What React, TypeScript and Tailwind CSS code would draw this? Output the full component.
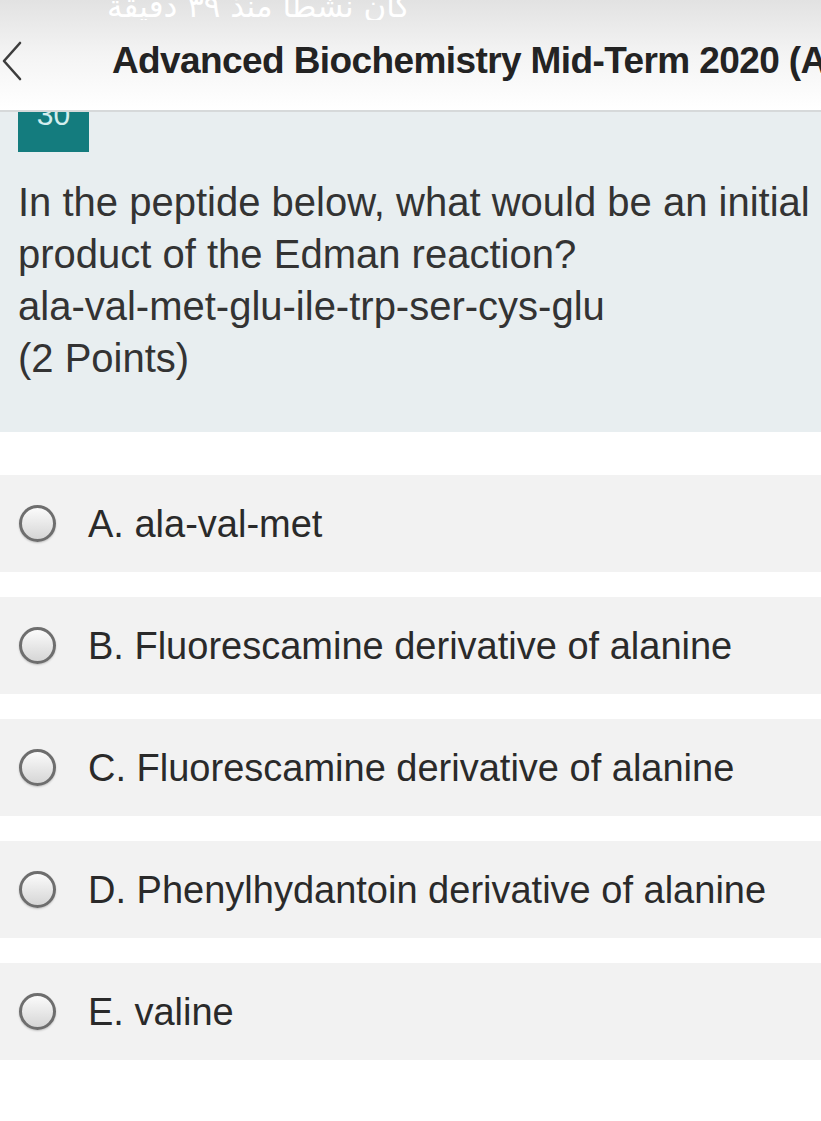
import React from "react";

const options = [
  "A. ala-val-met",
  "B. Fluorescamine derivative of alanine",
  "C. Fluorescamine derivative of alanine",
  "D. Phenylhydantoin derivative of alanine",
  "E. valine",
];

function Radio() {
  return (
    <span className="block h-[37px] w-[37px] shrink-0 rounded-full border-[3px] border-[#6e6e6e] bg-gradient-to-b from-[#fbfbfb] to-[#d6d6d6] shadow-[0_1px_2px_rgba(0,0,0,0.2)]" />
  );
}

export default function App() {
  return (
    <div className="h-[1121px] w-[821px] overflow-hidden bg-white font-['Liberation_Sans',Arial,sans-serif]">
      <header className="h-[112px] border-b-2 border-[#d6d9da] bg-gradient-to-b from-[#e2e2e2] via-[#f4f4f4] to-white">
        <div className="h-[20px] overflow-hidden pl-[107px]">
          <p
            dir="rtl"
            lang="ar"
            className="-mt-[17px] inline-block font-['DejaVu_Sans',sans-serif] text-[31px] leading-[36px] text-white"
          >
            كان نشطا منذ ٣٩ دقيقة
          </p>
        </div>
        <div className="flex h-[82px] items-center">
          <svg width="24" height="40" viewBox="0 0 24 40" className="ml-[1px] shrink-0">
            <path d="M19 2 L3 20 L19 38" fill="none" stroke="#3d3d3d" strokeWidth="2.6" strokeLinecap="round" strokeLinejoin="round" />
          </svg>
          <h1 className="ml-[87px] whitespace-nowrap text-[37px] font-bold leading-[44px] tracking-[-0.6px] text-[#232323]">
            Advanced Biochemistry Mid-Term 2020 (Autumn)
          </h1>
        </div>
      </header>

      <section className="h-[320px] bg-[#e8eef0] pl-[18px]">
        <div className="h-[40px] w-[71px] overflow-hidden bg-[#147c7e] text-center">
          <span className="-mt-[15px] block text-[30px] leading-[36px] text-[#d4eeee]">30</span>
        </div>
        <p className="mt-[24px] whitespace-nowrap text-[40px] leading-[52px] text-[#333333]">
          In the peptide below, what would be an initial
          <br />
          product of the Edman reaction?
          <br />
          ala-val-met-glu-ile-trp-ser-cys-glu
          <br />
          (2 Points)
        </p>
      </section>

      <div className="mt-[43px] flex flex-col gap-[25px]">
        {options.map((o) => (
          <div key={o} className="flex h-[97px] items-center gap-[32px] bg-[#f2f2f2] pl-[19px]">
            <Radio />
            <span className="text-[38px] leading-[44px] text-[#2a2a2a]">{o}</span>
          </div>
        ))}
      </div>
    </div>
  );
}
